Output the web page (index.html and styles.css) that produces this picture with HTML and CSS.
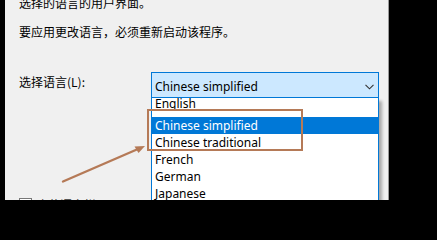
FILE: index.html
```html
<!DOCTYPE html>
<html lang="zh-CN">
<head>
<meta charset="utf-8">
<link rel="stylesheet" href="styles.css">
</head>
<body>
<div class="screen">
  <div class="edge"></div>
  <div class="panel">
    <p class="line first">选择的语言的用户界面。</p>
    <p class="line second">要应用更改语言，必须重新启动该程序。</p>
    <div class="row">
      <span class="label">选择语言(L):</span>
      <div class="combo">
        <span class="combo-text">Chinese simplified</span>
        <svg class="chev" width="9" height="6" viewBox="0 0 9 6"><polyline points="0.5,0.8 4.5,4.8 8.5,0.8" fill="none" stroke="#333" stroke-width="1.1"/></svg>
      </div>
    </div>
    <div class="check-row">
      <span class="box"></span>
      <span class="check-text">隐藏语言栏(H)</span>
    </div>
    <ul class="list">
      <li class="item top">English</li>
      <li class="item sel">Chinese simplified</li>
      <li class="item">Chinese traditional</li>
      <li class="item">French</li>
      <li class="item">German</li>
      <li class="item">Japanese</li>
    </ul>
    <div class="mark"></div>
    <svg class="arrow" width="385" height="200" viewBox="0 0 385 200">
      <line x1="58" y1="181.5" x2="133" y2="149" stroke="#b57a57" stroke-width="2.4" stroke-linecap="round"/>
      <polygon points="140,146 129.5,146.5 133.5,153" fill="#b57a57"/>
    </svg>
  </div>
  <div class="dark"></div>
</div>
</body>
</html>
```
FILE: styles.css
```css
html, body {
  margin: 0;
  padding: 0;
  background: #000;
  overflow: hidden;
}
.screen {
  display: flex;
  width: 437px;
  height: 200px;
  overflow: hidden;
}
.edge {
  width: 5px;
  flex: none;
  background: #000;
}
.panel {
  position: relative;
  width: 384px;
  flex: none;
  background: #f0f0f0;
  border-right: 1px solid #9a9a9a;
  padding-left: 14px;
  box-sizing: border-box;
  font-family: "Noto Sans CJK SC", "Noto Sans", sans-serif;
  font-size: 12px;
  color: #000;
}
.dark {
  flex: 1;
  background: #000;
}
.line {
  margin: 0;
  height: 16px;
  line-height: 16px;
  white-space: nowrap;
}
.first {
  margin-top: -5px;
}
.second {
  margin-top: 13px;
}
.row {
  display: flex;
  align-items: flex-start;
  margin-top: 32px;
}
.label {
  width: 132px;
  flex: none;
  line-height: 16px;
  margin-top: 2px;
}
.combo {
  width: 228px;
  height: 26px;
  box-sizing: border-box;
  border: 1px solid #0078d7;
  background: #cce8ff;
  display: flex;
  align-items: flex-start;
  justify-content: space-between;
  padding: 4px 4px 0 3px;
}
.combo-text, .item {
  font-family: "Noto Sans", sans-serif;
  font-size: 12px;
  line-height: 20px;
  white-space: nowrap;
}
.chev {
  margin-top: 7px;
}
.check-row {
  display: flex;
  align-items: flex-start;
  gap: 4px;
  margin-top: 100px;
}
.box {
  width: 13px;
  height: 13px;
  box-sizing: border-box;
  border: 1px solid #777;
  background: #fff;
}
.check-text {
  line-height: 16px;
  margin-top: -1px;
  color: #333;
}
.list {
  position: absolute;
  left: 146px;
  top: 98px;
  width: 228px;
  height: 110px;
  box-sizing: border-box;
  margin: 0;
  padding: 0;
  list-style: none;
  background: #fff;
  border-left: 1px solid #0078d7;
  border-right: 1px solid #0078d7;
  box-shadow: 3px 3px 3px rgba(0, 0, 0, 0.3);
}
.item {
  height: 17px;
  line-height: 17px;
  padding-left: 3px;
}
.item.top {
  height: 19px;
  line-height: 11px;
}
.item.sel {
  background: #0078d7;
  color: #fff;
}
.mark {
  position: absolute;
  left: 142px;
  top: 109px;
  width: 156px;
  height: 42px;
  box-sizing: border-box;
  border: 2px solid #b57a57;
}
.arrow {
  position: absolute;
  left: 0;
  top: 0;
  pointer-events: none;
}
```
